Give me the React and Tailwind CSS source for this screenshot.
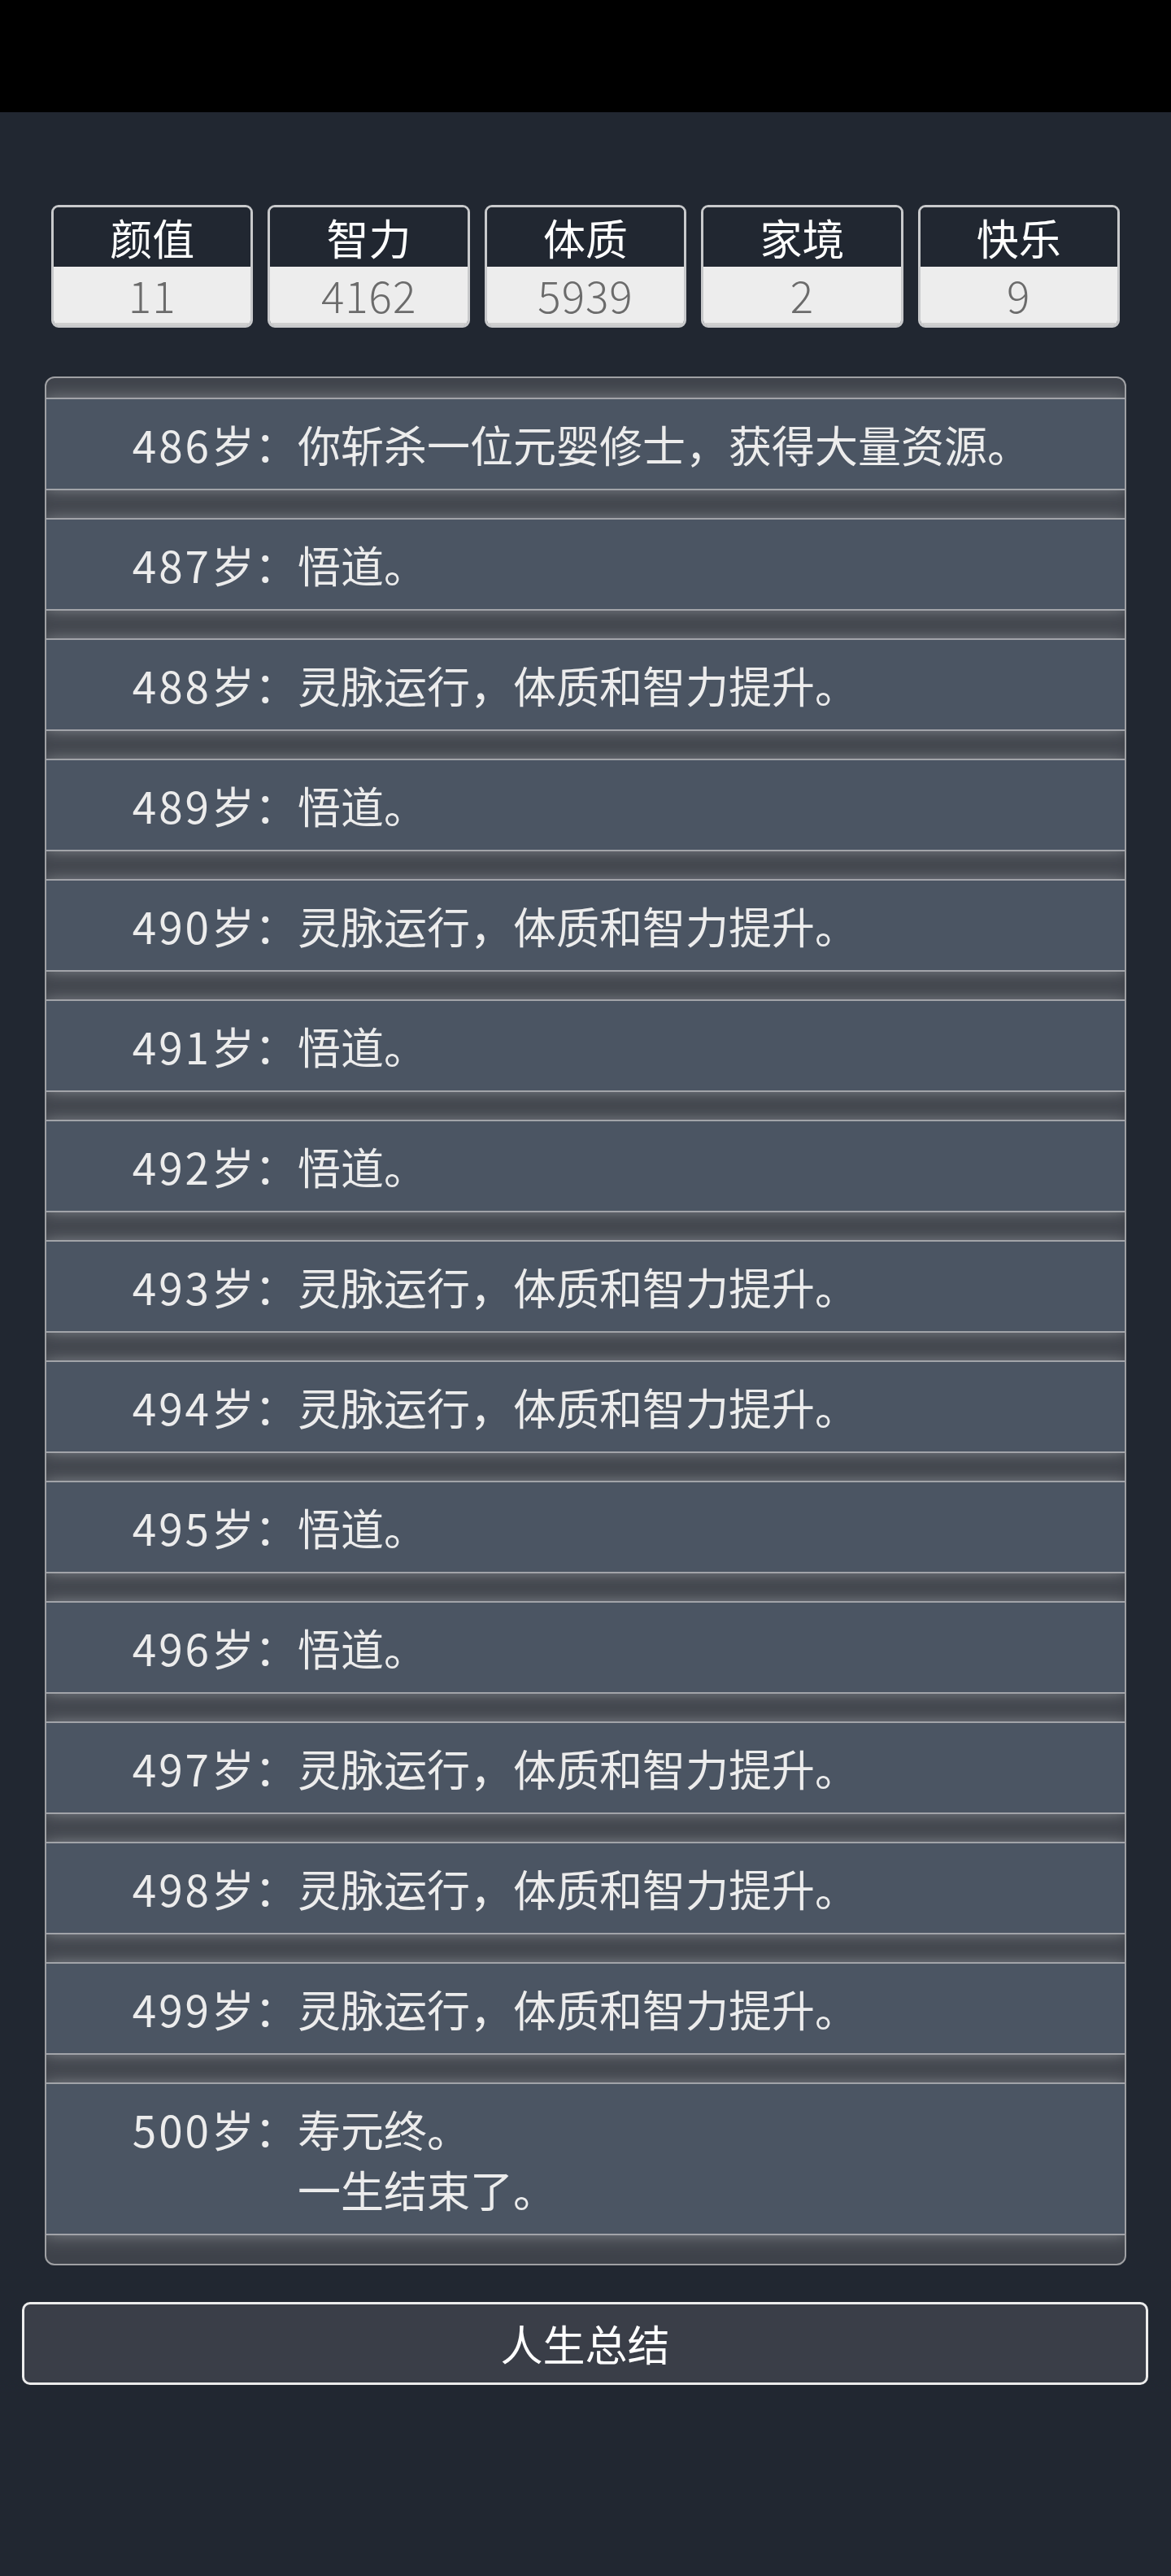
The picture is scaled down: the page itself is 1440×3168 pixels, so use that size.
import React from 'react';

const stats = [
  { label: '颜值', value: 11 },
  { label: '智力', value: 4162 },
  { label: '体质', value: 5939 },
  { label: '家境', value: 2 },
  { label: '快乐', value: 9 },
];

const GROW = '灵脉运行，体质和智力提升。';
const WU = '悟道。';

const events = [
  { age: 486, lines: ['你斩杀一位元婴修士，获得大量资源。'] },
  { age: 487, lines: [WU] },
  { age: 488, lines: [GROW] },
  { age: 489, lines: [WU] },
  { age: 490, lines: [GROW] },
  { age: 491, lines: [WU] },
  { age: 492, lines: [WU] },
  { age: 493, lines: [GROW] },
  { age: 494, lines: [GROW] },
  { age: 495, lines: [WU] },
  { age: 496, lines: [WU] },
  { age: 497, lines: [GROW] },
  { age: 498, lines: [GROW] },
  { age: 499, lines: [GROW] },
  { age: 500, lines: ['寿元终。', '一生结束了。'] },
];

const font = { fontFamily: '"Noto Sans CJK SC", "Noto Sans", sans-serif' };

const StatBox = ({ label, value }) => (
  <div className="flex flex-col rounded-[9px] border-[3px] border-[#c8c9cb] overflow-hidden">
    <div className="h-[73px] flex items-center justify-center bg-[#212731] text-white text-[52px] leading-none">
      {label}
    </div>
    <div className="h-[72px] flex items-center justify-center bg-[#ededed] border-b-[3px] border-[#d0d0d0] text-[#6b6b6b] text-[53px] font-light leading-none tracking-[1px]">
      {value}
    </div>
  </div>
);

export default function App() {
  return (
    <div className="min-h-[3168px] bg-[#212731]" style={font}>
      <div className="h-[138px] bg-black"></div>

      <div className="mx-auto mt-[114px] w-[1314px] grid grid-cols-5 gap-[18px]">
        {stats.map((s) => (
          <StatBox key={s.label} {...s} />
        ))}
      </div>

      <div className="ml-[55px] mt-[60px] w-[1330px] rounded-[12px] border-2 border-[#a0a1a4] bg-[#3f434b] overflow-hidden pt-[26px] pb-[37px]">
        <div className="flex flex-col gap-[38px]">
          {events.map((e) => (
            <div
              key={e.age}
              className="flex bg-[#4b5563] py-[18px] text-[53px] leading-[74px] text-[#ececec] shadow-[0_0_0_2px_rgba(165,168,173,0.95),0_0_20px_2px_rgba(150,153,158,0.75)]"
            >
              <div className="w-[309px] shrink-0 text-right whitespace-nowrap">
                <span className="tracking-[3px]">{e.age}</span>岁：
              </div>
              <div className="flex flex-col">
                {e.lines.map((l, i) => (
                  <div key={i} className="whitespace-nowrap">{l}</div>
                ))}
              </div>
            </div>
          ))}
        </div>
      </div>

      <div className="ml-[27px] mt-[45px] w-[1385px] h-[102px] rounded-[10px] border-[3px] border-[#ececec] bg-[#3a3e48] flex items-center justify-center text-white text-[52px]">
        人生总结
      </div>
    </div>
  );
}
